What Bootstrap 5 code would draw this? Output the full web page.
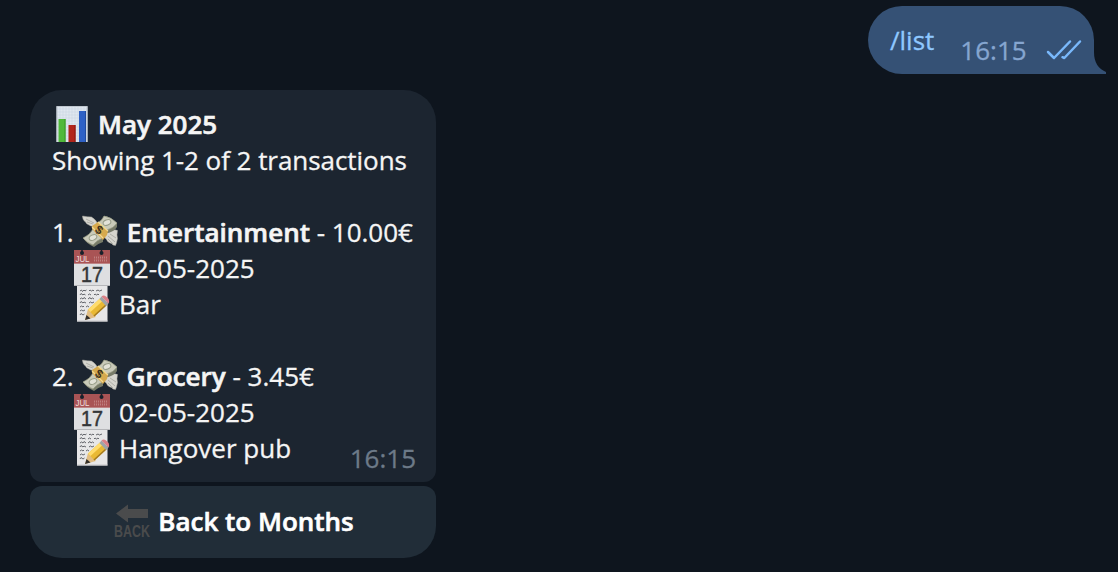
<!DOCTYPE html>
<html lang="en">
<head>
<meta charset="utf-8">
<meta name="viewport" content="width=device-width, initial-scale=1">
<title>Chat</title>
<link href="https://cdn.jsdelivr.net/npm/bootstrap@5.3.0/dist/css/bootstrap.min.css" rel="stylesheet">
<style>
body{background:#0e151e;color:#f5f5f5;font-family:"Open Sans",sans-serif;font-size:26px;line-height:36px;height:572px;overflow:hidden;-webkit-text-stroke:.3px}
strong{font-weight:600;-webkit-text-stroke:.6px}
svg text{-webkit-text-stroke:0}
.sent{width:226px;height:68px;margin:6px 24px 0 0;background:#355175;border-radius:34px 34px 0 34px;color:#8fc8ff;padding:16px 11px 0 22px}
.sent .stamp{color:#86a6d0;margin:10px 0 0 26px}
.tail{left:226px;bottom:0}
.ticks{margin:17px 0 0 19px}
.received{width:406px;margin:16px 0 0 30px}
.bubble{height:392px;background:#1c2530;border-radius:32px 32px 12px 12px;padding:16px 20px 0 22px}
.line{height:36px;white-space:nowrap}
.line svg,.back svg{flex:none;overflow:visible}
.showing{letter-spacing:-.05px}
.bubble .stamp{right:20px;bottom:6px;color:#6d7a88}
.back{height:72px;margin-top:4px;background:#212d38;border-radius:12px 12px 32px 32px;color:#fff;padding:0 0 3px 2px;border:0;font-size:26px;line-height:36px}
.chart{margin:0 8px 0 2px}
.cash{margin:0 9px 0 8px}
.inset{margin:0 9px 0 22px}
.back svg{margin-right:8px}
</style>
</head>
<body>
<svg class="d-none">
  <symbol id="cash" viewBox="0 0 36 36">
    <g fill="#d6d5ce" stroke="#a7a59c" stroke-width=".5">
      <path d="M13 12Q9 13 7 11 4 10 3.500 8 .5 6 .5 2q5 1 9 1 5 3 6 7z"/>
      <path d="M22 19q5 0 7-2 4-2 6.500-.5-1 4 0 8-1 5-2 7-3 0-4-2-4-1-5-4-3-2-2.500-6.500z"/>
    </g>
    <path d="M4 5l8 4M5 8l6 2M26 22l7 6M28 20l6 4M26 25l5 5" stroke="#a5a59d" stroke-width=".8"/>
    <path d="M15 9q5-2 7-7 7 1 13 7v4q-3 5-10 6z" fill="#777b68"/>
    <path d="M15 9q5-2 7-7 7 1 13 7-3 5-10 7z" fill="#c9cab9" stroke="#92967f" stroke-width=".7"/>
    <path d="M1 24q7-3 10-9l10 9v4q-6 2-9 5-7-3-11-9z" fill="#777b68"/>
    <path d="M1 24q7-3 10-9l10 9q-6 2-10 7-6-2-10-7z" fill="#c9cab9" stroke="#92967f" stroke-width=".7"/>
    <ellipse cx="25" cy="8.500" rx="4" ry="2.600" fill="#e2e2d7" stroke="#979c87" transform="rotate(-20 25 8.500)"/>
    <ellipse cx="11" cy="23.500" rx="4" ry="2.600" fill="#e2e2d7" stroke="#979c87" transform="rotate(-25 11 23.500)"/>
    <path d="M10 12l6-4 10 9-1 4-4 5-11-11z" fill="#d6aa4e"/>
    <path d="M16 8l10 9M10 13l11 11" stroke="#f2d994" stroke-width="1.300"/>
    <text x="17" y="20" text-anchor="middle" font-size="12" font-weight="700" fill="#3d321b" font-family="Liberation Sans,sans-serif" transform="rotate(35 17 16)">$</text>
  </symbol>
  <symbol id="calendar" viewBox="0 0 36 36">
    <path d="M0 0h36v36H0z" fill="#dedfe1"/>
    <path d="M0 0h36v14H0z" fill="#a95455"/>
    <path d="M0 13.500h36" stroke="#bf8586"/>
    <path d="M0 35.500h36" stroke="#b5b6b9"/>
    <circle cx="8" cy="3" r="2" fill="#17202b"/><circle cx="27.500" cy="3" r="2" fill="#17202b"/>
    <path d="M8 0v3M27.500 0v3" stroke="#17202b" stroke-width="1.500"/>
    <text x="1.500" y="12" font-size="9.500" textLength="14" lengthAdjust="spacingAndGlyphs" fill="#eedddd" font-family="Liberation Sans,sans-serif">JUL</text>
    <path d="M20 10.500h14M20 7.500h14" stroke="#c08080" stroke-width="2" stroke-dasharray="1 1"/>
    <text x="7" y="32" font-size="22" textLength="22" lengthAdjust="spacingAndGlyphs" fill="#343638" stroke="#343638" stroke-width=".5" font-family="Liberation Sans,sans-serif">17</text>
  </symbol>
  <symbol id="memo" viewBox="0 0 36 36">
    <path d="M3 0h30.500v35.500H3z" fill="#e7e7e8"/>
    <path d="M3 35h30.500" stroke="#c5c5c8"/>
    <g fill="none" stroke="#55575c" stroke-width=".9">
      <path d="M6 5l1.500-1 1 1.500L10 4l1 1 1.500-1M15 5l1-1 1.500 1L19 4l1 1M22 5l2-1 1.500 1L28 4M6 9l1-1.500L9 9l1-1 1.500 1M14 9l1.500-1L17 9M20 9l1-1 1.500 1L24 8l1 1M6 13l1.500-1L9 13l1-1.500L12 13M14 13l2-1.500 1 1.500 1.500-1 1.500 1M6 17l1-1.500L9 17l1-1 2 1M15 17l1.500-1L18 17l2-1M6 21l1.500-1L9 21l1-1M12 21l1.500-1 1.500 1M6 25l1.500-1L9 25l2-1M6 29l1-1.500L9 29l1.500-1"/>
    </g>
    <path d="M11 34l3-11 8 8z" fill="#e2bd82"/><path d="M11 34l1.500-5 4 3.500z" fill="#34302b"/>
    <path d="M14 23.500l12-11 6.500 7-12 11z" fill="#e9b934"/>
    <path d="M14 23.500l12-11 2.500 2.500-12 11z" fill="#ffdc6c"/>
    <path d="M19.500 29.500l12-11 1 1-12 11z" fill="#a47a22"/>
    <path d="M25.500 13l2-2.500 7 7-2.500 2.500z" fill="#a0a5a7"/>
    <path d="M27.500 10.500q2-2 4.500 0 4.500 3 2.500 7z" fill="#dc8187"/>
  </symbol>
</svg>

<div class="d-flex justify-content-end">
  <div class="sent position-relative d-flex align-items-start">
    <span>/list</span><span class="stamp">16:15</span>
    <svg class="ticks" width="36" height="22" viewBox="0 0 36 22" fill="none" stroke="#79b8fb" stroke-width="2.500" stroke-linecap="round" stroke-linejoin="round"><path d="M2 13l6 6L24 2.500M16.500 18.200l1.800.8L34 2.500"/></svg>
    <svg class="tail position-absolute" width="13" height="34" viewBox="0 0 13 34"><path d="M-1 0h1v12Q0 27 12 32v2H-1z" fill="#355175"/></svg>
  </div>
</div>

<div class="received">
  <div class="bubble position-relative">
    <div class="line d-flex">
      <svg class="chart" width="36" height="36" viewBox="0 0 36 36">
        <path d="M2.500 0h31v36h-31z" fill="#e0e7ef"/>
        <path d="M6 0v36M9 0v36M12 0v36M15 0v36M18 0v36M21 0v36M24 0v36M27 0v36M30 0v36M3 3h30M3 6h30M3 9h30M3 12h30M3 15h30M3 18h30M3 21h30M3 24h30M3 27h30M3 30h30M3 33h30" stroke="#cbd6e2" stroke-width=".6"/>
        <path d="M3 36V.5h30V36" fill="none" stroke="#c0c8d0"/>
        <path d="M4.500 13h7v23h-7z" fill="#50b93a"/><path d="M14.500 19h7v17h-7z" fill="#b2251b"/><path d="M25 5h7v31h-7z" fill="#2e61c5"/>
        <path d="M11 13v23" stroke="#399626"/><path d="M21 19v17" stroke="#8a1912"/><path d="M31.500 5v31" stroke="#204b9f"/>
      </svg><strong>May 2025</strong>
    </div>
    <div class="line showing">Showing 1-2 of 2 transactions</div>
    <div class="line"></div>
    <div class="line d-flex"><span>1.</span><svg class="cash" width="36" height="36"><use href="#cash"/></svg><span><strong>Entertainment</strong> - 10.00€</span></div>
    <div class="line d-flex"><svg class="inset" width="36" height="36"><use href="#calendar"/></svg>02-05-2025</div>
    <div class="line d-flex"><svg class="inset" width="36" height="36"><use href="#memo"/></svg>Bar</div>
    <div class="line"></div>
    <div class="line d-flex"><span>2.</span><svg class="cash" width="36" height="36"><use href="#cash"/></svg><span><strong>Grocery</strong> - 3.45€</span></div>
    <div class="line d-flex"><svg class="inset" width="36" height="36"><use href="#calendar"/></svg>02-05-2025</div>
    <div class="line d-flex"><svg class="inset" width="36" height="36"><use href="#memo"/></svg>Hangover pub</div>
    <span class="stamp position-absolute">16:15</span>
  </div>
  <button class="back w-100 d-flex align-items-center justify-content-center" type="button">
    <svg width="36" height="36" viewBox="0 0 36 36" fill="#4a4b4c"><path d="M2 10.500L14 1.500V6h20v9H14v4.500z"/><text x="0" y="33.500" font-size="16.500" font-weight="700" textLength="36" lengthAdjust="spacingAndGlyphs" font-family="Liberation Sans,sans-serif">BACK</text></svg>
    <strong>Back to Months</strong>
  </button>
</div>
<script src="https://cdn.jsdelivr.net/npm/bootstrap@5.3.0/dist/js/bootstrap.bundle.min.js"></script>
</body>
</html>
